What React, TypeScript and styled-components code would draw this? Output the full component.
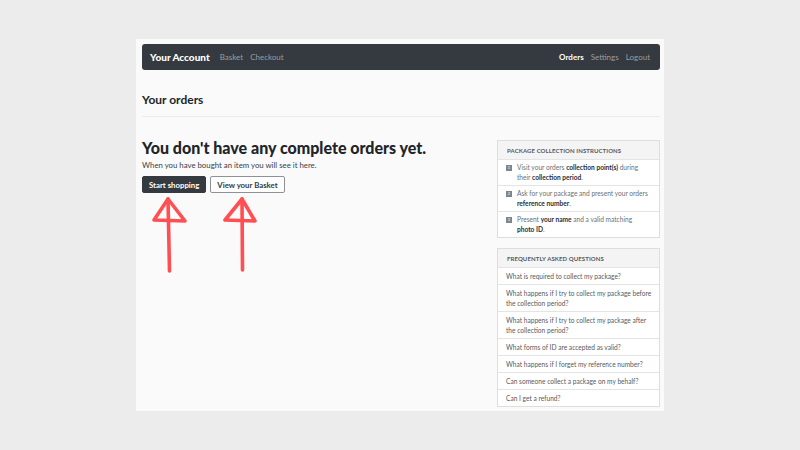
import styled, { createGlobalStyle } from "styled-components";

const GlobalStyle = createGlobalStyle`
  html, body {
    margin: 0;
    padding: 0;
    background: #ececec;
  }
  * {
    box-sizing: border-box;
  }
  body {
    font-family: Lato, "Open Sans", "Liberation Sans", sans-serif;
    color: #212529;
  }
`;

const steps = [
  <>
    Visit your orders <b>collection point(s)</b> during their <b>collection period</b>.
  </>,
  <>
    Ask for your package and present your orders <b>reference number</b>.
  </>,
  <>
    Present <b>your name</b> and a valid matching
    <br />
    <b>photo ID</b>.
  </>,
];

const questions = [
  "What is required to collect my package?",
  "What happens if I try to collect my package before the collection period?",
  "What happens if I try to collect my package after the collection period?",
  "What forms of ID are accepted as valid?",
  "What happens if I forget my reference number?",
  "Can someone collect a package on my behalf?",
  "Can I get a refund?",
];

const Arrows = () => (
  <svg width="130" height="82" viewBox="0 0 130 82">
    <g
      fill="none"
      stroke="#ff4f52"
      strokeWidth="3.6"
      strokeLinecap="round"
      strokeLinejoin="round"
    >
      <path d="M26 6 L27.5 78" />
      <path d="M26 6 L12 27 L43 28 L26 6" />
      <path d="M100 6 L100.5 77" />
      <path d="M100 6 L83 27 L113 28 L100 6" />
    </g>
  </svg>
);

const App = () => {
  return (
    <>
      <GlobalStyle />
      <Page>
        <Panel>
          <Navbar>
            <NavGroup>
              <Brand>Your Account</Brand>
              <NavLink>Basket</NavLink>
              <NavLink>Checkout</NavLink>
            </NavGroup>
            <NavGroup>
              <NavLink $active>Orders</NavLink>
              <NavLink>Settings</NavLink>
              <NavLink>Logout</NavLink>
            </NavGroup>
          </Navbar>
          <PageTitle>Your orders</PageTitle>
          <Content>
            <Main>
              <Heading>You don't have any complete orders yet.</Heading>
              <Lead>When you have bought an item you will see it here.</Lead>
              <Buttons>
                <Button $variant="primary">Start shopping</Button>
                <Button $variant="outline">View your Basket</Button>
              </Buttons>
              <Arrows />
            </Main>
            <Sidebar>
              <Card>
                <CardHeader>Package collection instructions</CardHeader>
                {steps.map((step, i) => (
                  <StepItem key={i}>
                    <StepNumber>{i + 1}</StepNumber>
                    <span>{step}</span>
                  </StepItem>
                ))}
              </Card>
              <Card>
                <CardHeader>Frequently asked questions</CardHeader>
                {questions.map((q) => (
                  <FaqItem key={q}>{q}</FaqItem>
                ))}
              </Card>
            </Sidebar>
          </Content>
        </Panel>
      </Page>
    </>
  );
};

const Page = styled.div`
  width: 800px;
  height: 450px;
  padding-top: 39px;
  display: flex;
  justify-content: center;
`;

const Panel = styled.div`
  width: 528px;
  height: 372px;
  background: #fafafa;
  padding: 5px 4px 0 6px;
`;

const Navbar = styled.nav`
  height: 26px;
  background: #343a40;
  border-radius: 3px;
  display: flex;
  align-items: center;
  justify-content: space-between;
  padding: 0 10px 0 8px;
`;

const NavGroup = styled.div`
  display: flex;
  align-items: center;
  gap: 7px;
`;

const Brand = styled.span`
  color: #ffffff;
  font-size: 10px;
  font-weight: 900;
  margin-right: 3px;
`;

const NavLink = styled.span<{ $active?: boolean }>`
  color: ${({ $active }) => ($active ? "#ffffff" : "#9a9da1")};
  font-size: 8px;
  font-weight: ${({ $active }) => ($active ? 700 : 400)};
`;

const PageTitle = styled.h1`
  margin: 22px 0 0;
  padding-bottom: 9px;
  font-size: 12px;
  font-weight: 700;
  color: #212529;
  border-bottom: 1px solid #ebebeb;
`;

const Content = styled.div`
  display: flex;
  justify-content: space-between;
  margin-top: 23px;
`;

const Main = styled.div`
  display: flex;
  flex-direction: column;
  align-items: flex-start;
`;

const Heading = styled.h2`
  margin: -1px 0 0;
  font-size: 16px;
  font-weight: 900;
  line-height: 18px;
  color: #212529;
`;

const Lead = styled.p`
  margin: 3px 0 0;
  font-size: 7.8px;
  color: #3a3f44;
`;

const Buttons = styled.div`
  display: flex;
  gap: 4px;
  margin-top: 6px;
`;

const Button = styled.button<{ $variant: "primary" | "outline" }>`
  height: 17px;
  padding: 0 6px;
  font-family: inherit;
  font-size: 7.8px;
  font-weight: 700;
  border-radius: 2px;
  border: 1px solid
    ${({ $variant }) => ($variant === "primary" ? "#343a40" : "#8e9296")};
  background: ${({ $variant }) => ($variant === "primary" ? "#343a40" : "#ffffff")};
  color: ${({ $variant }) => ($variant === "primary" ? "#ffffff" : "#343a40")};
`;

const Sidebar = styled.div`
  width: 163px;
  display: flex;
  flex-direction: column;
  gap: 10px;
`;

const Card = styled.div`
  border: 1px solid #dedede;
  background: #ffffff;
`;

const CardHeader = styled.div`
  height: 18px;
  display: flex;
  align-items: center;
  padding: 0 9px;
  background: #f4f4f4;
  font-size: 6px;
  font-weight: 700;
  letter-spacing: 0.1px;
  text-transform: uppercase;
  color: #555a5f;
`;

const StepItem = styled.div`
  display: flex;
  gap: 5px;
  padding: 3px 7px 3px 8px;
  border-top: 1px solid #e4e4e4;
  font-size: 6.6px;
  line-height: 9.5px;
  color: #6c7075;

  b {
    color: #2a2e33;
    font-weight: 700;
  }
`;

const StepNumber = styled.span`
  flex: none;
  width: 6px;
  height: 6px;
  margin-top: 1.8px;
  background: #80858a;
  color: #ffffff;
  font-size: 4px;
  line-height: 6px;
  text-align: center;
`;

const FaqItem = styled.div`
  padding: 3px 4px 3px 8px;
  border-top: 1px solid #e4e4e4;
  font-size: 6.6px;
  line-height: 10px;
  color: #565a5f;
`;

export default App;
